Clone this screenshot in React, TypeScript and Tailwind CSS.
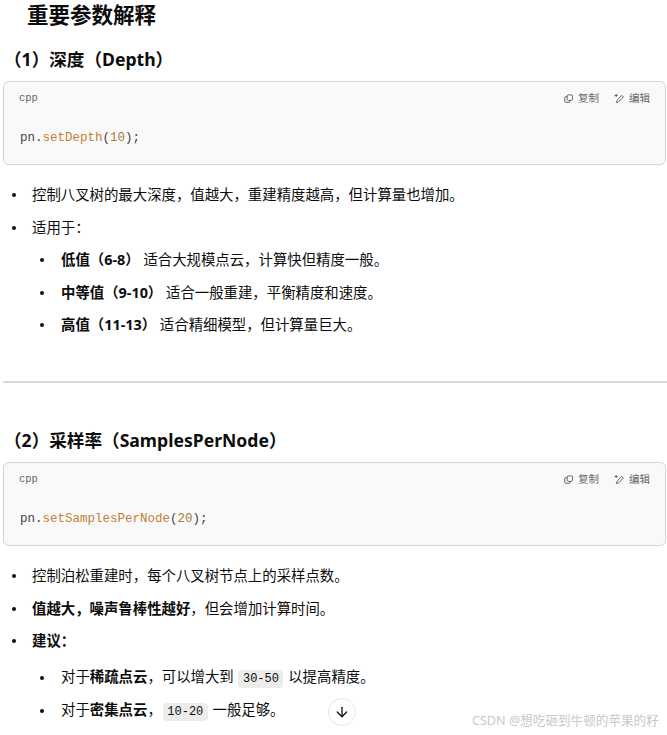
import React from 'react';
import { ArrowDown } from 'lucide-react';

const sans = "font-['Noto_Sans','Noto_Sans_CJK_SC',sans-serif]";

const CopyIcon = () => (
  <svg width="9" height="9" viewBox="0 0 10 10" fill="none" stroke="currentColor" strokeWidth="1.1">
    <rect x="3.5" y="1" width="6" height="6" rx="1.2" />
    <path d="M3.5 3H2a1.2 1.2 0 0 0-1.2 1.2V8A1.2 1.2 0 0 0 2 9.2h3.6A1.2 1.2 0 0 0 6.8 8V7" />
  </svg>
);

// pen with the little sparkle at its top left
const EditIcon = () => (
  <svg width="11" height="10" viewBox="0 0 11 10" fill="none" stroke="currentColor" strokeWidth="1" strokeLinecap="round">
    <path d="M8 1.6l1.4 1.4-5 5-2 .6.6-2z" />
    <path d="M1 1.5h2.4M2.2.4v2.2" />
  </svg>
);

const CodeBlock = ({ method, arg }: { method: string; arg: string }) => (
  <div className="ml-[3px] mr-px h-[84px] rounded-[6px] border border-[#d4d4d4] bg-[#f9f9f9]">
    <div className="flex h-[33px] items-center justify-between pl-[15px] pr-[15px] text-[10.5px] text-[#666]">
      <span className="pt-px font-['Liberation_Mono',monospace] text-[10.5px]">cpp</span>
      <div className="flex items-center gap-[15px]">
        <span className="flex items-center gap-[5px]"><CopyIcon />复制</span>
        <span className="flex items-center gap-[4px]"><EditIcon />编辑</span>
      </div>
    </div>
    <div className="pl-[16px] pt-[13px] font-['Liberation_Mono',monospace] text-[12.5px] leading-[20px] text-[#444]">
      pn.<span className="text-[#c18036]">{method}</span>(<span className="text-[#a9793a]">{arg}</span>);
    </div>
  </div>
);

const Code = ({ children }: { children: string }) => (
  <code className="mx-[1px] rounded-[4px] bg-[#ececec] px-[4.5px] py-[2px] font-['Liberation_Mono',monospace] text-[12px]">{children}</code>
);

const Item = ({ children, sub, cls }: { children: React.ReactNode; sub?: boolean; cls: string }) => (
  <li className={`flex items-center leading-[20px] ${sub ? 'pl-[40px]' : 'pl-[12px]'} ${cls}`}>
    <span className={`${sub ? 'mr-[17px]' : 'mr-[16px]'} h-[4px] w-[4px] shrink-0 rounded-full bg-[#111]`} />
    <span>{children}</span>
  </li>
);

export default function App() {
  return (
    <div className={`relative h-[735px] w-[667px] overflow-hidden bg-white text-[14.4px] text-[#0d0d0d] ${sans}`}>
      <h2 className="pl-[27px] pt-[1px] text-[21.5px] font-bold leading-[28px]">重要参数解释</h2>
      <h3 className="mb-[9px] pl-[4px] pt-[17px] text-[17.6px] font-bold leading-[26px]">（1）深度（Depth）</h3>
      <CodeBlock method="setDepth" arg="10" />
      <ul>
        <Item cls="mt-[20px]">控制八叉树的最大深度，值越大，重建精度越高，但计算量也增加。</Item>
        <Item cls="mt-[13px]">适用于：</Item>
        <Item sub cls="mt-[12px]"><b>低值（6-8）</b> 适合大规模点云，计算快但精度一般。</Item>
        <Item sub cls="mt-[13px]"><b>中等值（9-10）</b> 适合一般重建，平衡精度和速度。</Item>
        <Item sub cls="mt-[12px]"><b>高值（11-13）</b> 适合精细模型，但计算量巨大。</Item>
      </ul>
      <hr className="ml-[3px] mt-[46px] h-[2px] border-0 bg-[#d9d9d9]" />
      <h3 className="mb-[9px] pl-[4px] pt-[44px] text-[17.6px] font-bold leading-[26px]">（2）采样率（SamplesPerNode）</h3>
      <CodeBlock method="setSamplesPerNode" arg="20" />
      <ul>
        <Item cls="mt-[20px]">控制泊松重建时，每个八叉树节点上的采样点数。</Item>
        <Item cls="mt-[13px]"><b>值越大，噪声鲁棒性越好</b>，但会增加计算时间。</Item>
        <Item cls="mt-[12px]"><b>建议：</b></Item>
        <Item sub cls="mt-[16px]">对于<b>稀疏点云</b>，可以增大到 <Code>30-50</Code> 以提高精度。</Item>
        <Item sub cls="mt-[11px]">对于<b>密集点云</b>，<Code>10-20</Code> 一般足够。</Item>
      </ul>
      <button className="absolute left-[328px] top-[698px] flex h-[28px] w-[28px] items-center justify-center rounded-full border border-[#e3e3e3] bg-white text-[#111]">
        <ArrowDown size={16} />
      </button>
      <span className="absolute left-[472px] top-[712px] text-[12.6px] leading-[18px] text-[#c9c9c9]">CSDN @想吃砸到牛顿的苹果的籽</span>
    </div>
  );
}
